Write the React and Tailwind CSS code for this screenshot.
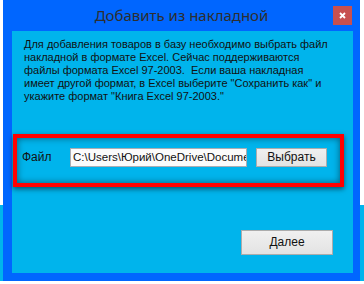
export default function App() {
  const body = "font-['Liberation_Sans',Arial,sans-serif]";
  return (
    <div className="relative w-[364px] h-[284px] bg-white overflow-hidden">
      <div className="absolute left-0 top-[205px] w-[3px] h-[76px] bg-[#00b4ec]" />
      <div className="absolute right-0 top-[205px] w-[4px] h-[76px] bg-[#00b4ec]" />
      <div className="relative ml-[3px] w-[357px] h-[281px] bg-[#0066ff] flex flex-col">
        <div className="h-[31px] relative flex items-center justify-center">
          <span className="font-['Noto_Sans',sans-serif] text-[15px] text-[#2e2e2e] leading-none -mt-[1px]">
            Добавить из накладной
          </span>
          <div className="absolute right-[8px] top-[6px] w-[19px] h-[19px] bg-[#c75050] flex items-center justify-center">
            <svg width="7" height="7" viewBox="0 0 7 7">
              <path d="M1 1L6 6M6 1L1 6" stroke="white" strokeWidth="1.8" />
            </svg>
          </div>
        </div>
        <div className="ml-[9px] mr-[7px] h-[242px] bg-[#00b4ec] flex flex-col">
          <div className={`${body} text-[11px] leading-[13px] text-[#111] pl-[12px] pt-[7px] whitespace-pre`}>
            {"Для добавления товаров в базу необходимо выбрать файл\nнакладной в формате Excel. Сейчас поддерживаются\nфайлы формата Excel 97-2003.  Если ваша накладная\nимеет другой формат, в Excel выберите \"Сохранить как\" и\nукажите формат \"Книга Excel 97-2003.\""}
          </div>
          <div className="mt-[31px] ml-[1px] mr-[9px] h-[53px] border-[4px] border-[#ff0000] shadow-[0_2px_5px_rgba(0,0,0,0.55),inset_0_0_7px_rgba(0,0,0,0.5)] flex items-start pt-[10px]">
            <span className={`${body} text-[12px] text-[#111] ml-[5px] w-[48px] leading-[19px]`}>Файл</span>
            <div className={`${body} w-[177px] h-[19px] bg-[#fbfbfb] border border-[#abadb3] text-[11.5px] leading-[17px] text-[#111] pl-[2px] overflow-hidden whitespace-nowrap`}>
              {"C:\\Users\\Юрий\\OneDrive\\Documents"}
            </div>
            <div className={`${body} ml-[9px] w-[71px] h-[19px] bg-gradient-to-b from-[#f0f0f0] to-[#e3e3e3] border border-[#acacac] text-[12px] leading-[17px] text-[#111] text-center`}>
              Выбрать
            </div>
          </div>
          <div className="flex-1" />
          <div className="flex justify-end pr-[20px] pb-[18px]">
            <div className={`${body} w-[92px] h-[25px] bg-gradient-to-b from-[#f0f0f0] to-[#e3e3e3] border border-[#acacac] text-[12px] leading-[23px] text-[#111] text-center`}>
              Далее
            </div>
          </div>
        </div>
      </div>
    </div>
  );
}
